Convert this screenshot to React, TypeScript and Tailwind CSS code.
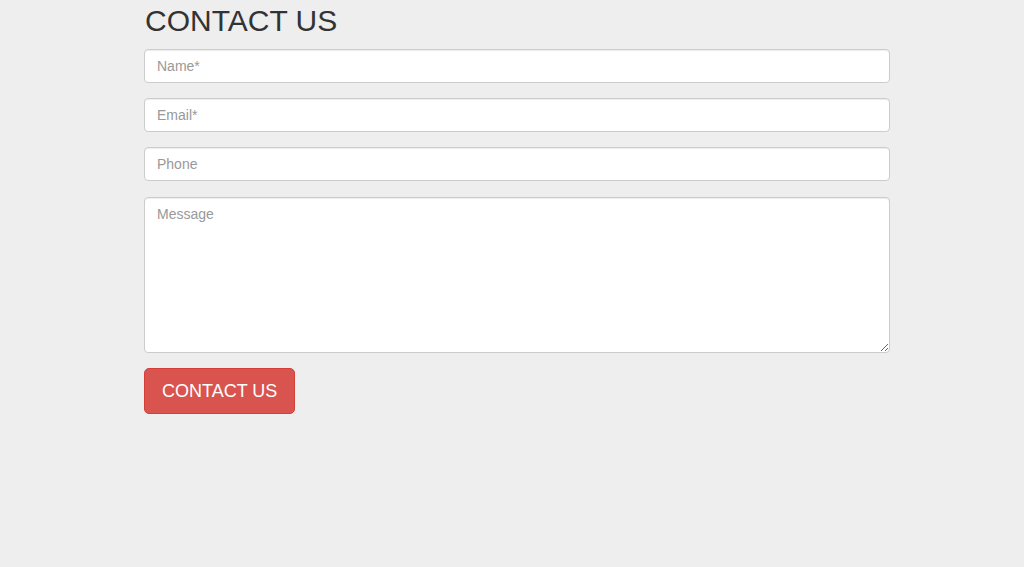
export default function App() {
  const field =
    "block w-full h-[34px] px-3 rounded-[4px] border border-[#ccc] bg-white text-[14px] text-[#555] placeholder:text-[#999] shadow-[inset_0_1px_1px_rgba(0,0,0,0.075)] outline-none";

  return (
    <div className="min-h-[567px] w-full bg-[#eee] font-['Liberation_Sans',Arial,sans-serif]">
      <div className="w-[746px] ml-[144px] pt-[4px]">
        <h2 className="text-[30px] leading-[33px] text-[#333] mb-[12px] ml-px">CONTACT US</h2>
        <form className="flex flex-col gap-[15px]" onSubmit={e => e.preventDefault()}>
          <input className={field} placeholder="Name*" />
          <input className={field} placeholder="Email*" />
          <input className={field} placeholder="Phone" />
          <textarea
            className="block w-full h-[156px] mt-px px-3 py-[6px] rounded-[4px] border border-[#ccc] bg-white text-[14px] leading-[20px] text-[#555] placeholder:text-[#999] shadow-[inset_0_1px_1px_rgba(0,0,0,0.075)] outline-none resize-y"
            placeholder="Message"
          />
          <div>
            <button
              type="submit"
              className="h-[46px] px-[17px] rounded-[5px] border border-[#d43f3a] bg-[#d9534f] text-white text-[18px] leading-[24px]"
            >
              CONTACT US
            </button>
          </div>
        </form>
      </div>
    </div>
  );
}
